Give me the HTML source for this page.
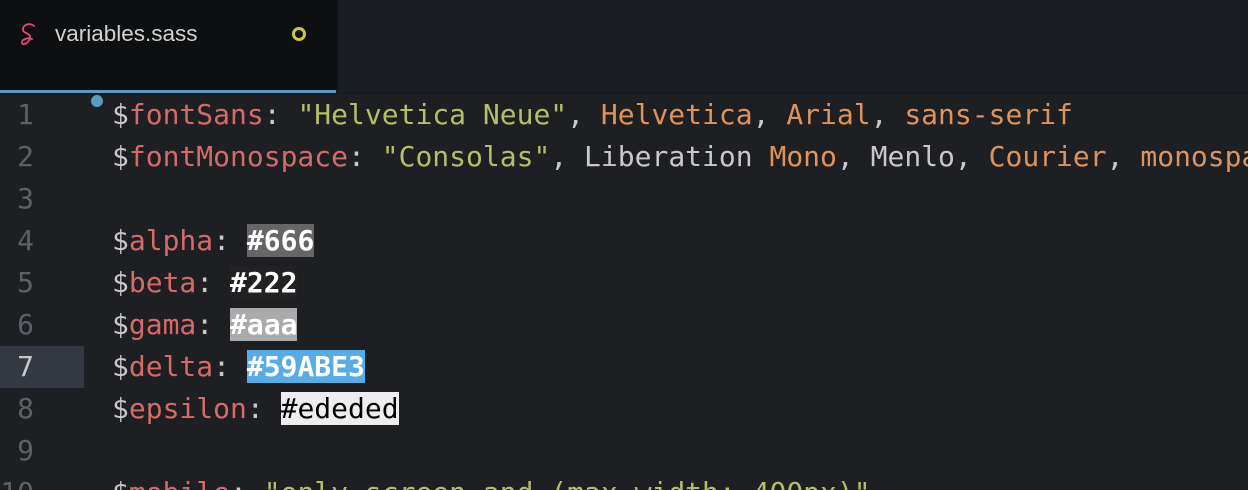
<!DOCTYPE html>
<html><head><style>
html,body{margin:0;width:1248px;height:490px;overflow:hidden}
body{background:#1e1f22;position:relative;font-family:"DejaVu Sans Mono",monospace}
.tabs{position:absolute;left:0;top:0;width:1248px;height:94px;background:#1a1d21}
.tab{position:absolute;left:0;top:0;width:336px;height:90px;background:#0e0f10;border-right:2px solid #131416}
.blue{position:absolute;left:0;top:90px;width:336px;height:3px;background:#5b9bbd}
.sep{position:absolute;left:0;top:93px;width:1248px;height:1px;background:#16181b}
.tab .name{position:absolute;left:55px;top:21px;font:22.5px "Liberation Sans",sans-serif;color:#d2d2d2}
.ring{position:absolute;left:292px;top:27px;width:8px;height:8px;border:3.5px solid #cdc740;border-radius:50%}
.line{position:absolute;left:0;height:42px;width:1248px;font-size:28px;line-height:42px;white-space:pre;color:#c8c8c8}
.ln{position:absolute;left:0;width:34px;text-align:right;color:#5d6066}
.code{position:absolute;left:112px}
.v{color:#d46a6a}.s{color:#b5bd68}.k{color:#de935f}
.b{font-weight:bold}
.dot{position:absolute;left:91px;top:95px;width:12px;height:12px;border-radius:50%;background:#5a9bc0}
</style></head><body>
<div class="tabs">
<div class="tab">
<svg style="position:absolute;left:18px;top:22px" width="22" height="26" viewBox="0 0 22 26"><path d="M16 4 C12 0 4 3 5 8 C6 12 13 11 12 16 C11 21 5 24 4 21 C3 18 9 15 14 17" fill="none" stroke="#e8477a" stroke-width="1.8" stroke-linecap="round"/></svg>
<div class="name">variables.sass</div>
<div class="ring"></div>
</div>
<div class="blue"></div><div class="sep"></div>
</div>
<div class="dot"></div>
<div class="line" style="top:94px"><span class="ln">1</span><span class="code">$<span class="v">fontSans</span>: <span class="s">"Helvetica Neue"</span>, <span class="k">Helvetica</span>, <span class="k">Arial</span>, <span class="k">sans-serif</span></span></div>
<div class="line" style="top:136px"><span class="ln">2</span><span class="code">$<span class="v">fontMonospace</span>: <span class="s">"Consolas"</span>, Liberation <span class="k">Mono</span>, Menlo, <span class="k">Courier</span>, <span class="k">monospace</span></span></div>
<div class="line" style="top:178px"><span class="ln">3</span></div>
<div class="line" style="top:220px"><span class="ln">4</span><span class="code">$<span class="v">alpha</span>: <span class="b" style="background:#666;color:#fff">#666</span></span></div>
<div class="line" style="top:262px"><span class="ln">5</span><span class="code">$<span class="v">beta</span>: <span class="b" style="background:#222;color:#fff">#222</span></span></div>
<div class="line" style="top:304px"><span class="ln">6</span><span class="code">$<span class="v">gama</span>: <span class="b" style="background:#aaa;color:#fff">#aaa</span></span></div>
<div style="position:absolute;left:0;top:346px;width:84px;height:42px;background:#343841"></div>
<div class="line" style="top:346px"><span class="ln" style="color:#c8c8c8">7</span><span class="code">$<span class="v">delta</span>: <span class="b" style="background:#59ABE3;color:#fff">#59ABE3</span></span></div>
<div class="line" style="top:388px"><span class="ln">8</span><span class="code">$<span class="v">epsilon</span>: <span style="background:#ededed;color:#000">#ededed</span></span></div>
<div class="line" style="top:430px"><span class="ln">9</span></div>
<div class="line" style="top:472px"><span class="ln">10</span><span class="code">$<span class="v">mobile</span>: <span class="s">"only screen and (max-width: 400px)"</span></span></div>
</body></html>
